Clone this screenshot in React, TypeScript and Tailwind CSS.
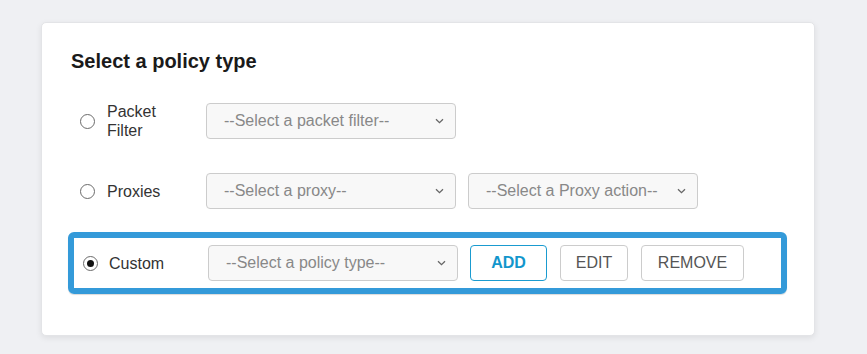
import React from "react";

const font = { fontFamily: '"Liberation Sans", Arial, sans-serif' };

function Chevron() {
  return (
    <svg width="9" height="6" viewBox="0 0 9 6" className="absolute right-[11px] top-1/2 -translate-y-1/2 pointer-events-none">
      <path d="M1 1.2 L4.5 4.6 L8 1.2" fill="none" stroke="#666" strokeWidth="1.3" />
    </svg>
  );
}

function FakeSelect({ text, w }: { text: string; w: string }) {
  return (
    <div className={`relative ${w} h-[36px] shrink-0 rounded-[4px] border border-[#cccccc] bg-[#f8f8f8] flex items-center pl-[17px] text-[16px] text-[#888888]`}>
      <span>{text}</span>
      <Chevron />
    </div>
  );
}

function Radio({ checked }: { checked?: boolean }) {
  return (
    <span className="w-[15px] h-[15px] shrink-0 rounded-full border-[1.5px] border-[#6b6b6b] flex items-center justify-center bg-white">
      {checked && <span className="w-[7px] h-[7px] rounded-full bg-[#111]" />}
    </span>
  );
}

export default function App() {
  return (
    <div className="min-h-[354px] w-[867px] bg-[#eff0f3] pt-[22px] pl-[41px]" style={font}>
      <div className="w-[774px] h-[314px] bg-white rounded-[5px] border border-[#e3e4e7] shadow-[0_2px_6px_rgba(0,0,0,0.08)] pl-[29px] pt-[25px]">
        <h2 className="text-[20px] font-bold text-[#1a1a1a] leading-[26px]">Select a policy type</h2>

        <div className="mt-[29px] flex items-center pl-[9px] h-[36px]">
          <div className="w-[126px] flex items-center gap-[12px]">
            <Radio />
            <span className="text-[16px] leading-[19px] text-[#333] w-[60px]">Packet Filter</span>
          </div>
          <FakeSelect text="--Select a packet filter--" w="w-[250px]" />
        </div>

        <div className="mt-[34px] flex items-center pl-[9px] h-[36px]">
          <div className="w-[126px] flex items-center gap-[12px]">
            <Radio />
            <span className="text-[16px] leading-[19px] text-[#333]">Proxies</span>
          </div>
          <FakeSelect text="--Select a proxy--" w="w-[250px]" />
          <div className="w-[12px]" />
          <FakeSelect text="--Select a Proxy action--" w="w-[230px]" />
        </div>

        <div className="mt-[23px] -ml-[3px] w-[719px] h-[62px] rounded-[6px] border-[6px] border-[#349ad9] shadow-[0_1px_1px_rgba(0,0,0,0.15)] flex items-center pl-[9px]">
          <div className="w-[125px] flex items-center gap-[11px]">
            <Radio checked />
            <span className="text-[16px] leading-[19px] text-[#333]">Custom</span>
          </div>
          <FakeSelect text="--Select a policy type--" w="w-[250px]" />
          <button className="ml-[12px] w-[77px] h-[36px] rounded-[4px] border border-[#1a9bd0] bg-white text-[16px] font-bold text-[#1296cc]">ADD</button>
          <button className="ml-[13px] w-[68px] h-[36px] rounded-[4px] border border-[#cccccc] bg-white text-[16px] text-[#555]">EDIT</button>
          <button className="ml-[13px] w-[103px] h-[36px] rounded-[4px] border border-[#cccccc] bg-white text-[16px] text-[#555]">REMOVE</button>
        </div>
      </div>
    </div>
  );
}
